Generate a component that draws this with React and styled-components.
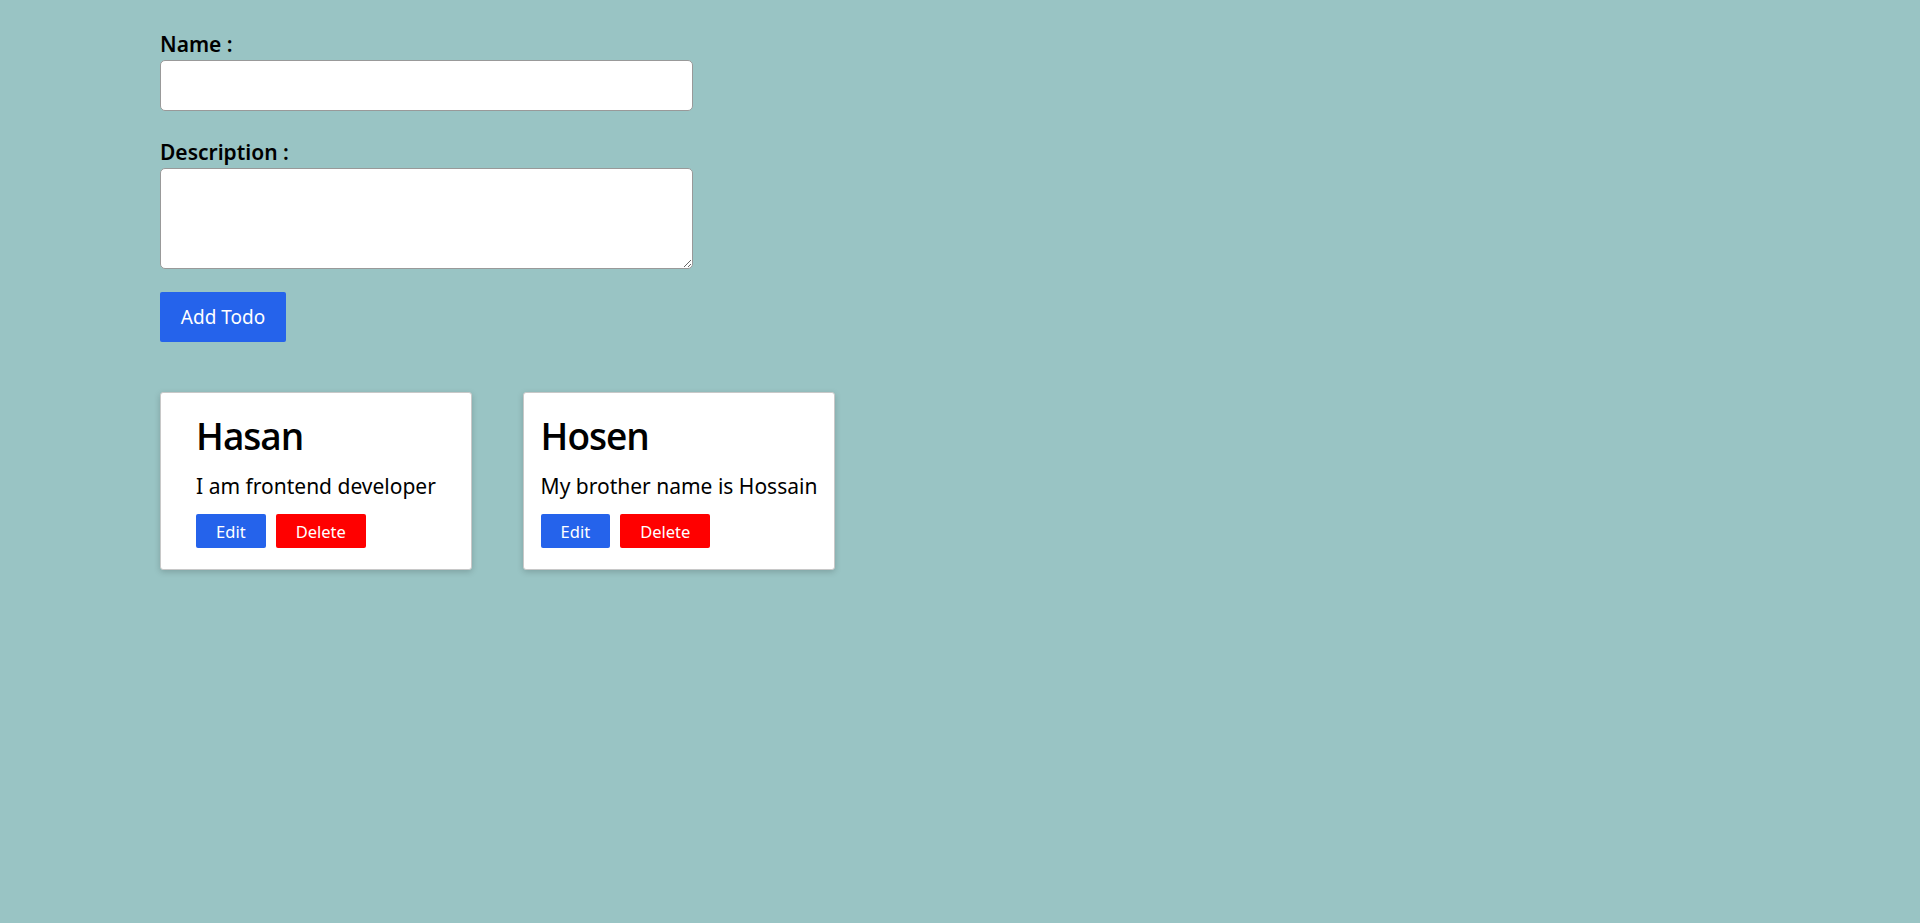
import React from "react";
import styled, { createGlobalStyle } from "styled-components";

const GlobalStyle = createGlobalStyle`
  html, body {
    margin: 0;
    padding: 0;
    background: #99c4c4;
  }
  body {
    font-family: "Noto Sans", "Open Sans", sans-serif;
    color: #000;
  }
`;

const Page = styled.div`
  min-height: 923px;
  box-sizing: border-box;
  background: #99c4c4;
  padding: 31px 0 0 160px;
`;

const Form = styled.form`
  display: flex;
  flex-direction: column;
  align-items: flex-start;
  width: 533px;
`;

const Field = styled.div`
  display: flex;
  flex-direction: column;
  gap: 2px;
  width: 100%;
  margin-bottom: ${(p) => p.$gap}px;
`;

const Label = styled.label`
  font-size: 21px;
  font-weight: 600;
  line-height: 27px;
`;

const Input = styled.input`
  box-sizing: border-box;
  width: 100%;
  height: 51px;
  border: 1px solid #999;
  border-radius: 5px;
  background: #fff;
  padding: 0 10px;
  font: inherit;
  font-size: 18px;
  outline: none;
`;

const TextArea = styled.textarea`
  box-sizing: border-box;
  width: 100%;
  height: 101px;
  border: 1px solid #999;
  border-radius: 5px;
  background: #fff;
  padding: 8px 10px;
  font: inherit;
  font-size: 18px;
  outline: none;
  display: block;
`;

const AddButton = styled.button`
  box-sizing: border-box;
  width: 126px;
  height: 50px;
  border: none;
  border-radius: 2px;
  background: #2563eb;
  color: #fff;
  font-family: inherit;
  font-size: 19px;
  cursor: pointer;
`;

const CardList = styled.div`
  display: flex;
  gap: 51px;
  margin-top: 50px;
`;

const Card = styled.div`
  box-sizing: border-box;
  width: 312px;
  background: #fff;
  border: 1px solid #c8c8c8;
  border-radius: 3px;
  box-shadow: 0 2px 6px rgba(0, 0, 0, 0.18);
  display: flex;
  justify-content: center;
  padding: 18px 0 21px;
`;

const CardBody = styled.div`
  display: flex;
  flex-direction: column;
  align-items: flex-start;
`;

const Title = styled.h2`
  margin: 0;
  font-family: "Open Sans", "Noto Sans", sans-serif;
  font-size: 37px;
  font-weight: 600;
  line-height: 50px;
  letter-spacing: -1px;
`;

const Desc = styled.p`
  margin: 11px 0 0;
  font-size: 21px;
  line-height: 28px;
`;

const Actions = styled.div`
  display: flex;
  gap: 10px;
  margin-top: 14px;
`;

const ActionButton = styled.button`
  height: 34px;
  padding: 0 20px;
  border: none;
  border-radius: 2px;
  background: ${(p) => (p.$danger ? "#ff0000" : "#2563eb")};
  color: #fff;
  font-family: inherit;
  font-size: 16.5px;
  cursor: pointer;
`;

const todos = [
  { id: 1, name: "Hasan", description: "I am frontend developer" },
  { id: 2, name: "Hosen", description: "My brother name is Hossain" },
];

export default function App() {
  return (
    <>
      <GlobalStyle />
      <Page>
        <Form onSubmit={(e) => e.preventDefault()}>
          <Field $gap={28}>
            <Label htmlFor="name">Name :</Label>
            <Input id="name" type="text" />
          </Field>
          <Field $gap={23}>
            <Label htmlFor="desc">Description :</Label>
            <TextArea id="desc" />
          </Field>
          <AddButton type="submit">Add Todo</AddButton>
        </Form>
        <CardList>
          {todos.map((t) => (
            <Card key={t.id}>
              <CardBody>
                <Title>{t.name}</Title>
                <Desc>{t.description}</Desc>
                <Actions>
                  <ActionButton>Edit</ActionButton>
                  <ActionButton $danger>Delete</ActionButton>
                </Actions>
              </CardBody>
            </Card>
          ))}
        </CardList>
      </Page>
    </>
  );
}
